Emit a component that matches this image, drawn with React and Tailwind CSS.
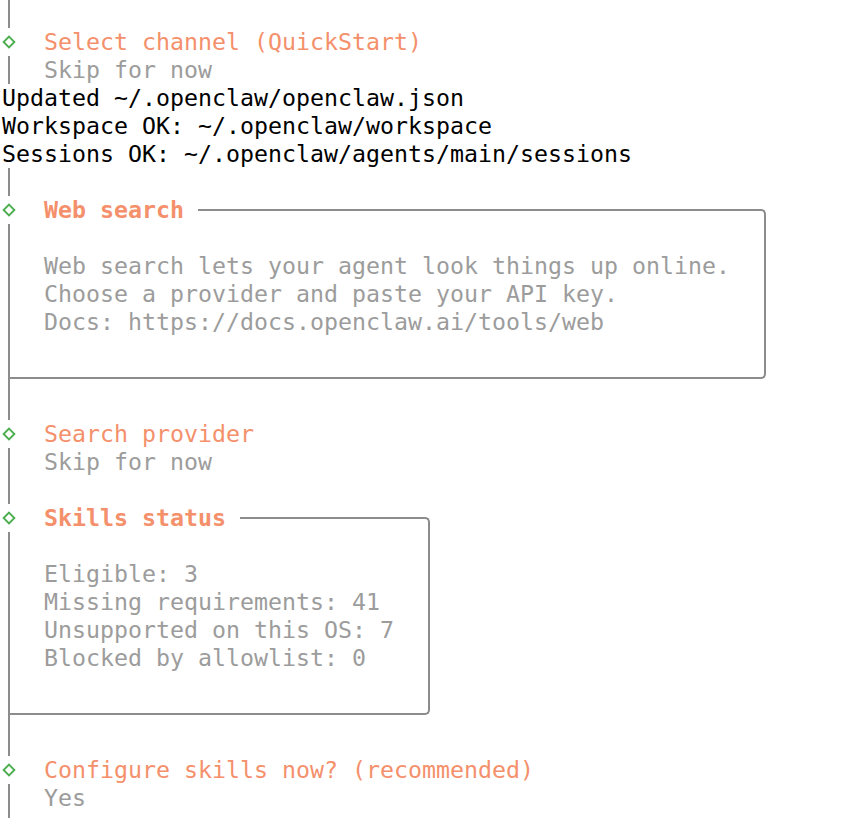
const RULE = 'border-[#8c8c8c]'

function Rail() {
  return (
    <div className="flex w-[14px] shrink-0 justify-center self-stretch">
      <div className="w-[2px] bg-[#8c8c8c]" />
    </div>
  )
}

function Diamond() {
  return (
    <div className="flex w-[14px] shrink-0 items-center justify-center">
      <svg width="14" height="14" viewBox="0 0 14 14">
        <path d="M7 1.6 L12.4 7 L7 12.4 L1.6 7 Z" fill="none" stroke="#47ad4b" strokeWidth="1.8" strokeLinejoin="miter" />
      </svg>
    </div>
  )
}

function Line({ mark, tone = 'gray', children }) {
  const color = tone === 'orange' ? 'text-[#f4906b]' : 'text-[#9c9c9c]'
  return (
    <div className="flex h-[28px]">
      {mark === 'diamond' ? <Diamond /> : <Rail />}
      {children && <div className={`whitespace-pre pl-[28px] ${color}`}>{children}</div>}
    </div>
  )
}

function Plain({ children }) {
  return <div className="h-[28px] whitespace-pre text-black">{children}</div>
}

function Panel({ title, width, lines }) {
  return (
    <div className={width}>
      <div className="flex h-[28px]">
        <Diamond />
        <div className="whitespace-pre pl-[28px] pr-[14px] font-bold text-[#f4906b]">{title}</div>
        <div className="flex flex-1 flex-col">
          <div className="h-[13px]" />
          <div className={`flex-1 rounded-tr-[5px] border-t-2 border-r-2 ${RULE}`} />
        </div>
      </div>
      <div className={`border-r-2 ${RULE}`}>
        <Line />
        {lines.map((l) => (
          <Line key={l}>{l}</Line>
        ))}
        <Line />
      </div>
      <div className="flex h-[28px] pl-[6px]">
        <div className={`flex-1 border-l-2 ${RULE}`}>
          <div className={`h-[15px] rounded-br-[5px] border-r-2 border-b-2 ${RULE}`} />
        </div>
      </div>
    </div>
  )
}

export default function App() {
  return (
    <div className="h-[818px] overflow-hidden bg-white pl-[2px] font-['DejaVu_Sans_Mono',monospace] text-[23.25px] leading-[28px]">
      <Line />
      <Line mark="diamond" tone="orange">Select channel (QuickStart)</Line>
      <Line>Skip for now</Line>
      <Plain>Updated ~/.openclaw/openclaw.json</Plain>
      <Plain>Workspace OK: ~/.openclaw/workspace</Plain>
      <Plain>Sessions OK: ~/.openclaw/agents/main/sessions</Plain>
      <Line />
      <Panel
        title="Web search"
        width="w-[764px]"
        lines={[
          'Web search lets your agent look things up online.',
          'Choose a provider and paste your API key.',
          'Docs: https://docs.openclaw.ai/tools/web',
        ]}
      />
      <Line />
      <Line mark="diamond" tone="orange">Search provider</Line>
      <Line>Skip for now</Line>
      <Line />
      <Panel
        title="Skills status"
        width="w-[428px]"
        lines={['Eligible: 3', 'Missing requirements: 41', 'Unsupported on this OS: 7', 'Blocked by allowlist: 0']}
      />
      <Line />
      <Line mark="diamond" tone="orange">Configure skills now? (recommended)</Line>
      <Line>Yes</Line>
      <Line />
    </div>
  )
}
